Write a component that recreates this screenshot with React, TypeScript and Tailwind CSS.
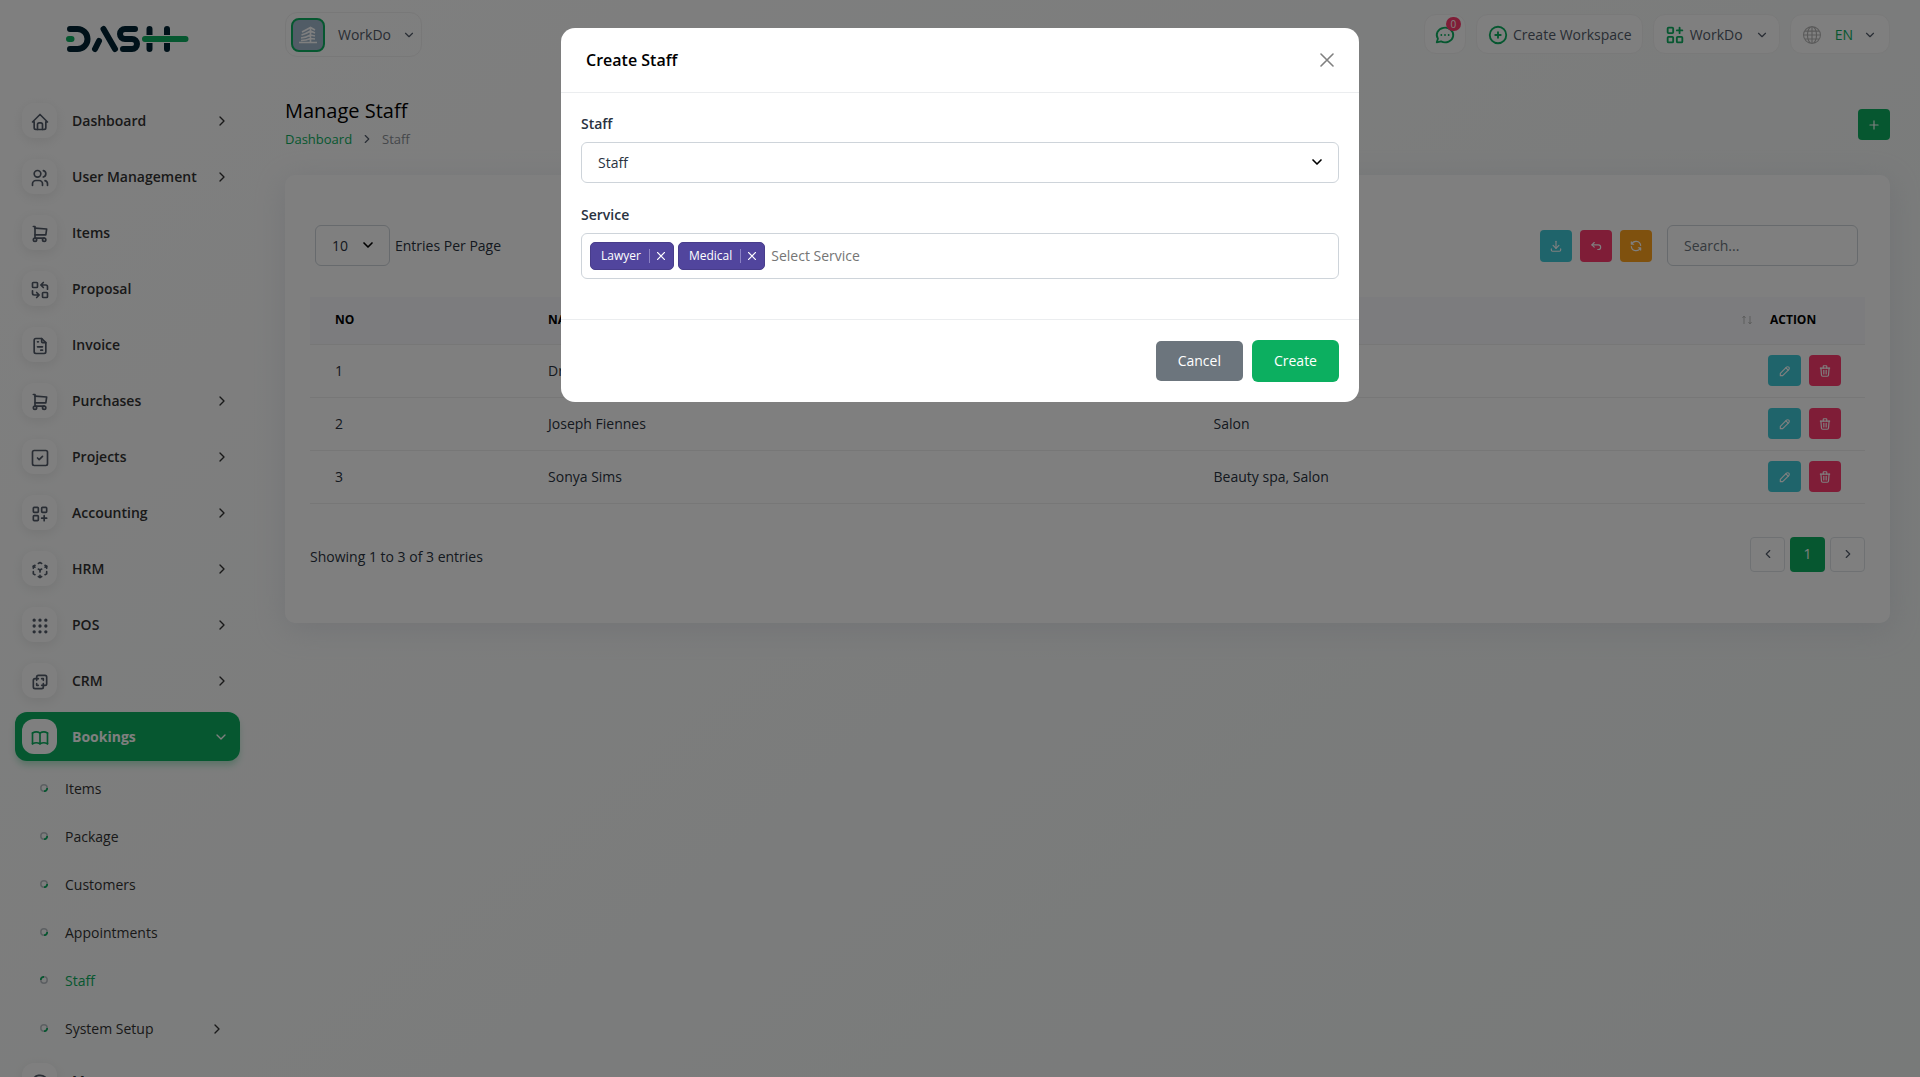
import type { ReactNode } from 'react';
import { BsGlobe } from 'react-icons/bs';
import { FiChevronDown, FiChevronLeft, FiChevronRight } from 'react-icons/fi';
import {
  TbApps,
  TbArrowBackUp,
  TbBook,
  TbCirclePlus,
  TbCube3dSphere,
  TbDownload,
  TbFileInvoice,
  TbGridDots,
  TbHome,
  TbLayersDifference,
  TbLayoutGridAdd,
  TbPencil,
  TbPlus,
  TbRefresh,
  TbReplace,
  TbShoppingCart,
  TbSquareCheck,
  TbTrash,
  TbUsers,
} from 'react-icons/tb';

interface NavItem {
  label: string;
  icon: ReactNode;
  arrow?: boolean;
}

const NAV: NavItem[] = [
  { label: 'Dashboard', icon: <TbHome />, arrow: true },
  { label: 'User Management', icon: <TbUsers />, arrow: true },
  { label: 'Items', icon: <TbShoppingCart /> },
  { label: 'Proposal', icon: <TbReplace /> },
  { label: 'Invoice', icon: <TbFileInvoice /> },
  { label: 'Purchases', icon: <TbShoppingCart />, arrow: true },
  { label: 'Projects', icon: <TbSquareCheck />, arrow: true },
  { label: 'Accounting', icon: <TbLayoutGridAdd />, arrow: true },
  { label: 'HRM', icon: <TbCube3dSphere />, arrow: true },
  { label: 'POS', icon: <TbGridDots />, arrow: true },
  { label: 'CRM', icon: <TbLayersDifference />, arrow: true },
];

const BOOKING_LINKS = ['Items', 'Package', 'Customers', 'Appointments', 'Staff', 'System Setup'];

const STAFF = [
  { no: 1, name: 'Dr. John', service: 'Lawyer' },
  { no: 2, name: 'Joseph Fiennes', service: 'Salon' },
  { no: 3, name: 'Sonya Sims', service: 'Beauty spa, Salon' },
];

function Logo() {
  return (
    <svg className="h-7 w-31" viewBox="0 0 124 28" fill="none" strokeLinecap="round" strokeWidth="6">
      <g stroke="#002333" strokeLinejoin="round">
        <path d="M5 4h7.500a9.500 9.500 0 0 1 0 20H5" />
        <path d="M38.500 4 50 24M34 16 30 24" />
        <path d="M70 4H60a5 5 0 0 0 0 10h7a5 5 0 0 1 0 10h-9" />
        <path d="M84.500 4v20M102 4v20" />
      </g>
      <path d="M76 14h48" stroke="#fff" strokeWidth="8" strokeLinecap="butt" />
      <path d="M4 14h2.500M80 14h40.500" stroke="#0caf60" />
    </svg>
  );
}

function Building() {
  return (
    <svg className="size-[18px]" viewBox="0 0 18 18" fill="none" stroke="#fff" strokeWidth="1.600">
      <path d="M3 6Q7 4 11.500 1.500L16 4M2.500 9q4-1 9-4L16 7M2 12q5-.5 9.500-3L16 10M2 14.500q5 0 9.500-2L16 13M0 16.500h18M11.500 2v14" />
    </svg>
  );
}

function MessageIcon({ className }: { className?: string }) {
  return (
    <svg
      className={className}
      width="1em"
      height="1em"
      viewBox="0 0 24 24"
      fill="none"
      stroke="currentColor"
      strokeWidth="2"
      strokeLinecap="round"
      strokeLinejoin="round"
    >
      <path d="M3 20l1.300-3.900a9 8 0 1 1 3.400 2.900L3 20M12 12v.01M8 12v.01M16 12v.01" />
    </svg>
  );
}

function NavRow({ item }: { item: NavItem }) {
  return (
    <li>
      <a href="#" className="flex h-[49px] items-center rounded-xl px-[7px] text-[#333]">
        <span className="mr-[15px] flex size-[35px] items-center justify-center rounded-xl bg-white pt-0.5 text-xl text-[#525b69] shadow-[0_3px_12px_rgba(0,0,0,0.08)]">
          {item.icon}
        </span>
        <span className="flex-1 font-semibold">{item.label}</span>
        {item.arrow && <FiChevronRight className="mr-[3px] size-4" />}
      </a>
    </li>
  );
}

function Sidebar() {
  return (
    <nav className="h-full w-[255px] shrink-0 overflow-hidden px-[15px]">
      <div className="flex h-24 items-start pt-[25px] pl-[50px]">
        <Logo />
      </div>
      <ul className="flex flex-col gap-[7px]">
        {NAV.map((item) => (
          <NavRow key={item.label} item={item} />
        ))}
        <li>
          <a
            href="#"
            className="flex h-[49px] items-center rounded-xl bg-[#0caf60] px-[7px] text-white shadow-[0_5px_7px_-1px_rgba(12,175,96,0.3)]"
          >
            <span className="mr-[15px] flex size-[35px] items-center justify-center rounded-xl bg-white pt-0.5 text-xl text-[#0caf60]">
              <TbBook />
            </span>
            <span className="flex-1 font-bold">Bookings</span>
            <FiChevronDown className="mr-1 size-4" />
          </a>
          <ul className="-mb-1 pt-1">
            {BOOKING_LINKS.map((label) => (
              <li key={label}>
                <a
                  href="#"
                  className={
                    'flex h-12 items-center pl-[25px] font-medium ' +
                    (label === 'Staff' ? 'text-[#0caf60]' : 'text-[#333]')
                  }
                >
                  <svg className="mr-[17px] mb-0.5 size-2" viewBox="0 0 8 8" fill="none" strokeWidth="1.500">
                    <circle cx="4" cy="4" r="3.200" stroke="#b9bfc5" />
                    <path
                      d={label === 'Staff' ? 'M.8 4A3.200 3.200 0 0 1 4 .8' : 'M7.200 4A3.200 3.200 0 0 1 4 7.200'}
                      stroke="#0caf60"
                      strokeWidth="1.800"
                    />
                  </svg>
                  <span className="flex-1">{label}</span>
                  {label === 'System Setup' && <FiChevronRight className="mr-[15px] size-4" />}
                </a>
              </li>
            ))}
          </ul>
        </li>
        <NavRow item={{ label: 'Messenger', icon: <MessageIcon /> }} />
      </ul>
    </nav>
  );
}

const pill = 'flex h-10 items-center rounded-xl border border-[#f3f3f3] bg-white pt-px';

function TopBar() {
  return (
    <header className="flex h-[71px] items-start justify-between">
      <button className="mt-3 flex h-[45px] items-center rounded-xl border border-[#f1f1f1] px-[5px] text-[#525b69]">
        <span className="flex size-[34px] items-center justify-center rounded-lg border-2 border-[#0caf60] bg-[#a3b8cc]">
          <Building />
        </span>
        <span className="ml-[13px] font-medium">WorkDo</span>
        <FiChevronDown className="ml-[11px] size-3.5" />
      </button>
      <div className="mt-3.5 flex gap-2.5 font-medium text-[#525b69]">
        <button aria-label="Messages" className={pill + ' relative px-[9px]'}>
          <MessageIcon className="size-[22px] text-[#0caf60]" />
          <span className="absolute top-0.5 right-1 flex h-3.5 w-[15px] items-center justify-center rounded-full bg-[#ff3a6e] text-[10px] text-white">
            0
          </span>
        </button>
        <button className={pill + ' px-2.5'}>
          <TbCirclePlus className="mr-1 size-[22px] text-[#0caf60]" />
          Create Workspace
        </button>
        <button className={pill + ' px-2.5'}>
          <TbApps className="mr-1 size-[22px] text-[#0caf60]" />
          WorkDo
          <FiChevronDown className="ml-3 size-3.5" />
        </button>
        <button className={pill + ' px-3'}>
          <BsGlobe className="mr-3.5 size-[18px] text-[#b5b5b5]" />
          <span className="text-[#0caf60]">EN</span>
          <FiChevronDown className="ml-2.5 size-3.5" />
        </button>
      </div>
    </header>
  );
}

function StaffTable() {
  return (
    <table className="w-full table-fixed text-left">
      <colgroup>
        <col className="w-[13.7%]" />
        <col className="w-[42.8%]" />
        <col className="w-[36.3%]" />
        <col />
      </colgroup>
      <thead className="bg-[#f8f9fd] text-xs text-black">
        <tr className="h-[47px] border-b border-[#eee]">
          <th className="px-[25px] font-bold">NO</th>
          <th className="px-[25px] font-bold">NAME</th>
          <th className="pl-[25px] font-bold">
            <div className="flex justify-between">
              SERVICE
              <svg className="size-3 self-center" viewBox="0 0 12 12" fill="none" stroke="#bbb">
                <path d="M3 10V2M1.500 4 3 2l1.500 2M9 2v8M7.500 8 9 10l1.500-2" />
              </svg>
            </div>
          </th>
          <th className="pl-[17px] font-bold">ACTION</th>
        </tr>
      </thead>
      <tbody>
        {STAFF.map((row) => (
          <tr key={row.no} className="h-[53px] border-b border-[#eee]">
            <td className="px-[25px]">{row.no}</td>
            <td className="px-[25px]">{row.name}</td>
            <td className="px-[25px]">{row.service}</td>
            <td className="pl-[15px]">
              <div className="flex gap-2 text-white">
                <button aria-label="Edit" className="flex h-[31px] w-[33px] items-center justify-center rounded bg-[#3ec9d6]">
                  <TbPencil className="size-3.5" />
                </button>
                <button aria-label="Delete" className="flex h-[31px] w-8 items-center justify-center rounded bg-[#ff3a6e]">
                  <TbTrash className="size-3.5" />
                </button>
              </div>
            </td>
          </tr>
        ))}
      </tbody>
    </table>
  );
}

function StaffCard() {
  return (
    <section className="rounded-[10px] bg-white px-[25px] pt-[50px] pb-[51px] shadow-[0_6px_30px_rgba(182,186,203,0.3)]">
      <div className="flex items-center justify-between pr-[7px] pl-[5px]">
        <label className="flex items-center gap-[5px]">
          <span className="relative">
            <select className="h-[41px] w-[75px] appearance-none rounded-md border border-[#ced4da] bg-white pl-4">
              <option>10</option>
            </select>
            <FiChevronDown strokeWidth={2.5} className="pointer-events-none absolute top-3 right-3.5 size-4 text-black" />
          </span>
          Entries Per Page
        </label>
        <div className="flex items-center gap-2 text-white">
          <button aria-label="Export" className="flex size-8 items-center justify-center rounded bg-[#3ec9d6]">
            <TbDownload className="size-3.5" />
          </button>
          <button aria-label="Reset" className="flex size-8 items-center justify-center rounded bg-[#ff3a6e]">
            <TbArrowBackUp className="size-3.5" />
          </button>
          <button aria-label="Reload" className="flex size-8 items-center justify-center rounded bg-[#ffa21d]">
            <TbRefresh className="size-3.5" />
          </button>
          <input
            aria-label="Search"
            placeholder="Search..."
            className="ml-[7px] h-[41px] w-[191px] rounded-md border border-[#ced4da] px-4 placeholder:text-[#6c757d]"
          />
        </div>
      </div>
      <div className="mt-[31px]">
        <StaffTable />
      </div>
      <div className="mt-[33px] flex items-center justify-between">
        <p className="pt-1.5">Showing 1 to 3 of 3 entries</p>
        <div className="flex gap-[5px] text-[#525b69]">
          <button aria-label="Previous page" className="flex size-[35px] items-center justify-center rounded border border-[#dee2e6]">
            <FiChevronLeft className="size-3.5" />
          </button>
          <button className="size-[35px] rounded bg-[#0caf60] text-white">1</button>
          <button aria-label="Next page" className="flex size-[35px] items-center justify-center rounded border border-[#dee2e6]">
            <FiChevronRight className="size-3.5" />
          </button>
        </div>
      </div>
    </section>
  );
}

function Chip({ label }: { label: string }) {
  return (
    <span className="flex h-7 items-center rounded-[5px] border border-[#483d8b] bg-[#51459d] pl-2.5 text-xs font-medium text-white">
      {label}
      <button aria-label={'Remove ' + label} className="ml-2 flex h-3.5 items-center border-l border-[#8b82c4] pr-2 pl-[7px]">
        <svg className="size-2" viewBox="0 0 8 8" stroke="currentColor" strokeWidth="1.200">
          <path d="M0 0l8 8M8 0 0 8" />
        </svg>
      </button>
    </span>
  );
}

function CreateStaffDialog() {
  return (
    <div className="fixed inset-0 z-10 bg-black/50">
      <div role="dialog" aria-labelledby="dialog-title" className="mx-auto mt-7 w-full max-w-[798px] rounded-[14px] bg-white text-[#293240]">
        <div className="flex h-[65px] items-center justify-between border-b border-[#ebedef] px-[25px]">
          <h2 id="dialog-title" className="text-base font-semibold text-black">
            Create Staff
          </h2>
          <button aria-label="Close" className="text-[#808080]">
            <svg className="size-3.5" viewBox="0 0 14 14" stroke="currentColor" strokeWidth="1.600" strokeLinecap="round">
              <path d="M1 1l12 12M13 1 1 13" />
            </svg>
          </button>
        </div>
        <div className="px-5 pt-[21px] pb-10">
          <label htmlFor="staff" className="mb-2 block font-semibold">
            Staff
          </label>
          <div className="relative mb-[22px]">
            <select id="staff" className="h-[41px] w-full appearance-none rounded-md border border-[#ced4da] bg-white px-4">
              <option>Staff</option>
            </select>
            <FiChevronDown strokeWidth={2.5} className="pointer-events-none absolute top-3 right-3.5 size-4 text-black" />
          </div>
          <label htmlFor="service" className="mb-2 block font-semibold">
            Service
          </label>
          <div className="flex h-[46px] items-center gap-1 rounded-md border border-[#ced4da] px-2">
            <Chip label="Lawyer" />
            <Chip label="Medical" />
            <input
              id="service"
              placeholder="Select Service"
              className="min-w-0 flex-1 px-0.5 outline-none placeholder:text-[#757575]"
            />
          </div>
        </div>
        <div className="flex h-[83px] items-center justify-end gap-[9px] border-t border-[#ebedef] px-5 font-medium text-white">
          <button className="h-10 rounded-[5px] bg-[#6c757d] px-[22px]">Cancel</button>
          <button className="h-[42px] rounded-md bg-[#0caf60] px-[22px]">Create</button>
        </div>
      </div>
    </div>
  );
}

export default function App() {
  return (
    <div className="flex h-screen overflow-hidden bg-[linear-gradient(141deg,#fff_3%,#f0f4f3_100%)] font-['Open_Sans','Noto_Sans',sans-serif] text-sm text-[#293240]">
      <Sidebar />
      <main className="min-w-0 flex-1 px-[30px]">
        <TopBar />
        <div className="flex h-[104px] items-start justify-between pt-[26px]">
          <div>
            <h1 className="text-xl font-medium text-black">Manage Staff</h1>
            <nav className="mt-[5px] flex items-center text-[13px]">
              <a href="#" className="text-[#0caf60]">
                Dashboard
              </a>
              <FiChevronRight className="mx-2 size-3.5 text-[#525b69]" />
              <span className="text-[#8a8f95]">Staff</span>
            </nav>
          </div>
          <button aria-label="Add staff" className="mt-3 flex h-[31px] w-8 items-center justify-center rounded bg-[#0caf60] text-white">
            <TbPlus className="size-3.5" />
          </button>
        </div>
        <StaffCard />
      </main>
      <CreateStaffDialog />
    </div>
  );
}
